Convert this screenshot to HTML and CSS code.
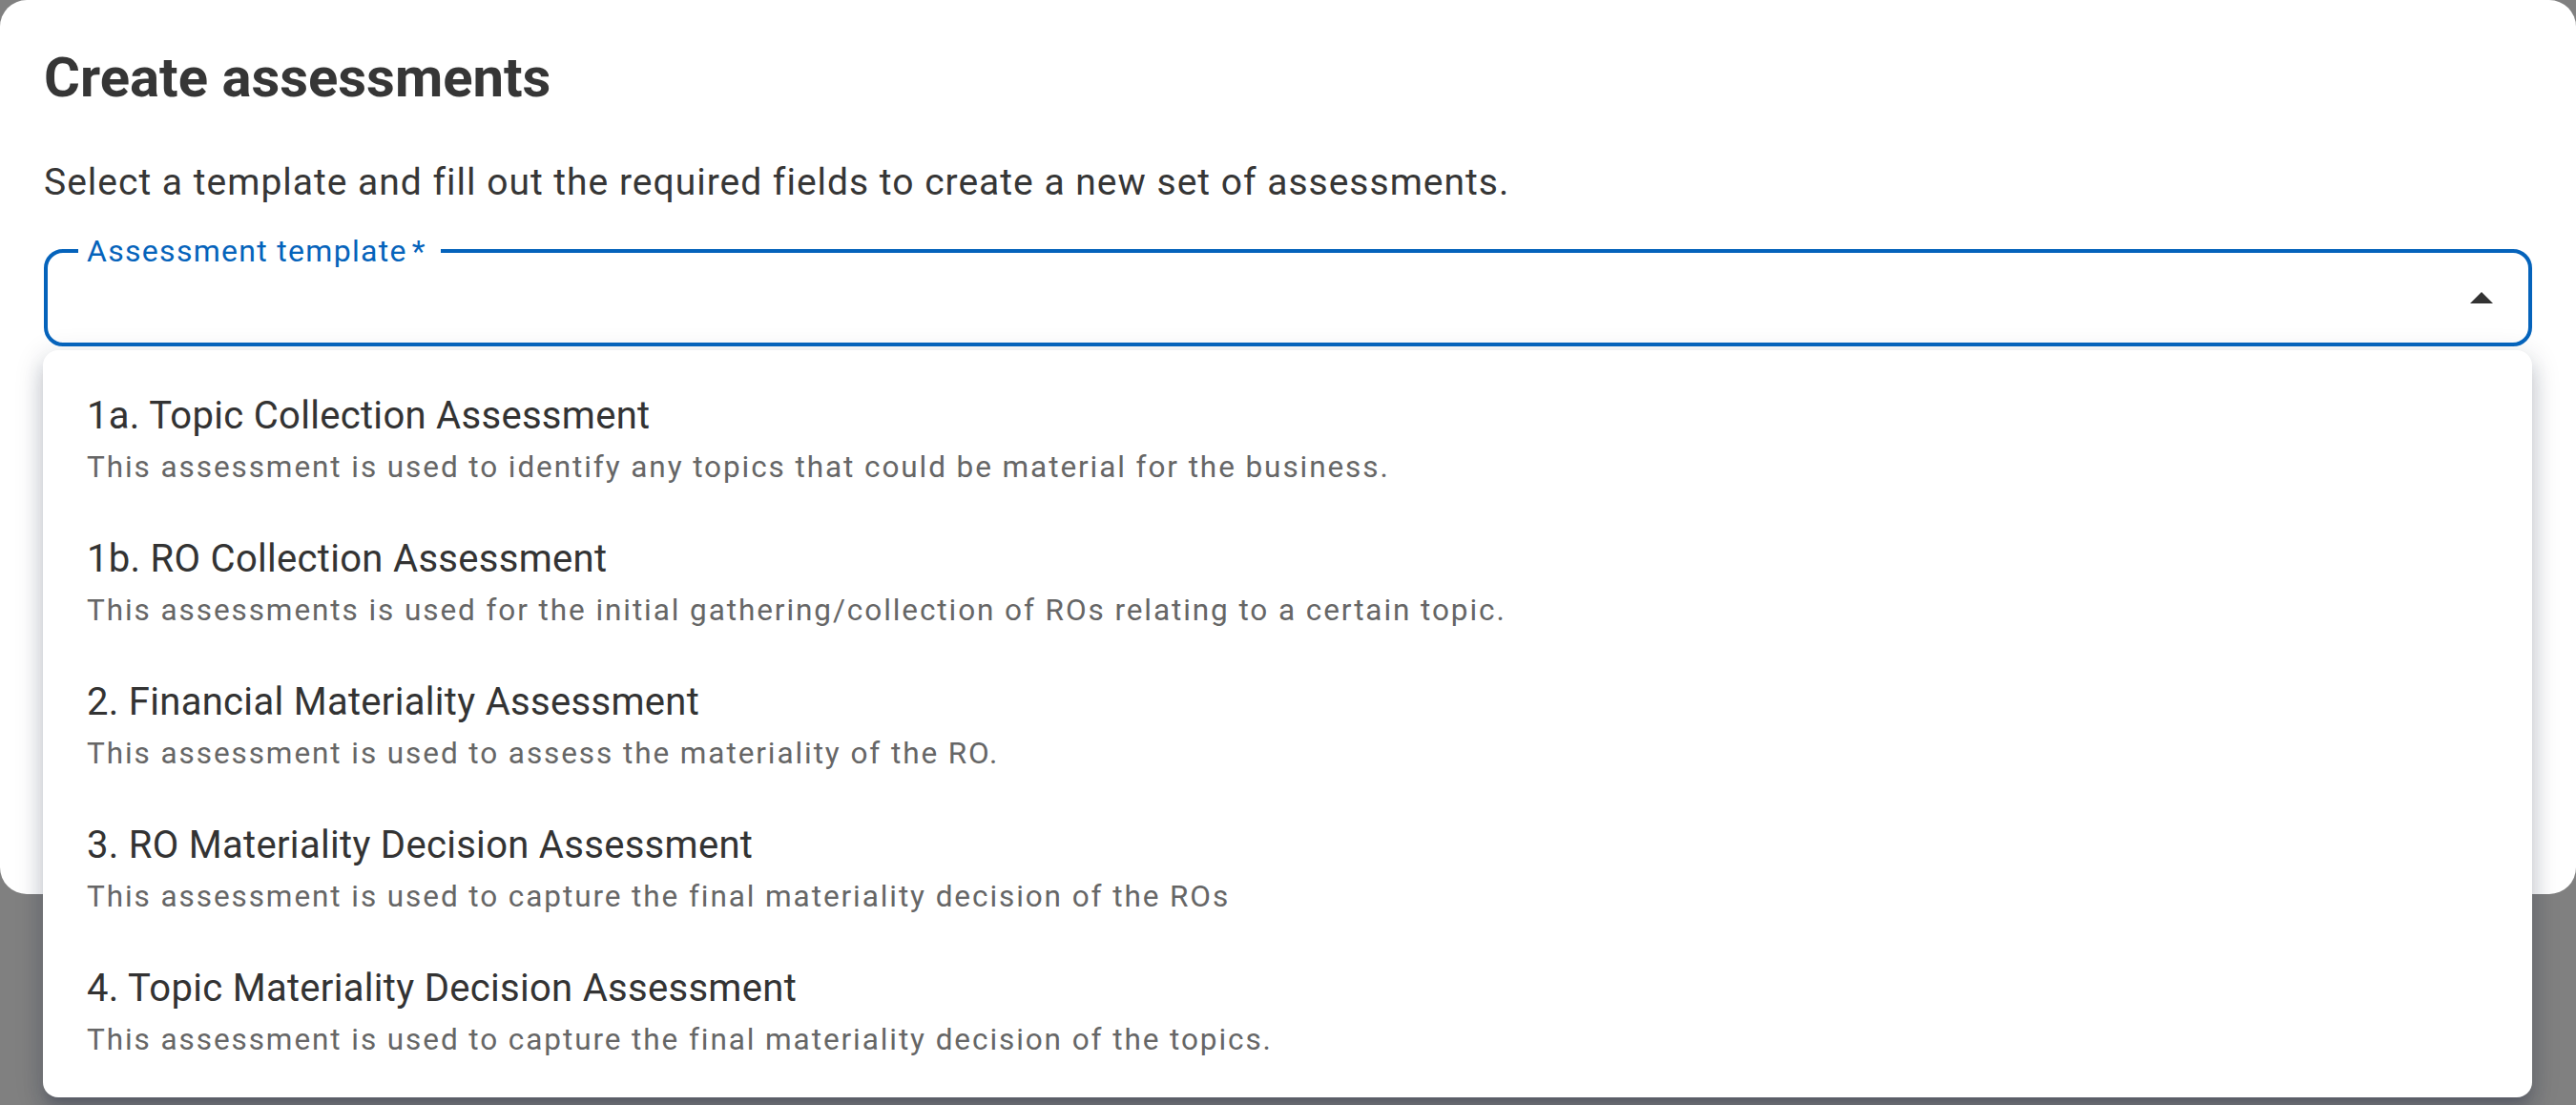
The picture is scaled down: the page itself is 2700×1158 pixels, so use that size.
FILE: index.html
```html
<!DOCTYPE html>
<html lang="en">
<head>
<meta charset="utf-8">
<title>Create assessments</title>
<link rel="stylesheet" href="styles.css">
</head>
<body>
<div class="modal">
  <h1 class="title">Create assessments</h1>
  <p class="subtitle">Select a template and fill out the required fields to create a new set of assessments.</p>
  <div class="field">
    <span class="label">Assessment template<span class="req">*</span></span>
    <svg class="arrow" width="24" height="12" viewBox="0 0 24 12"><path d="M0 12 L12 0 L24 12 Z" fill="#333"/></svg>
  </div>
  <ul class="menu">
    <li class="item">
      <div class="item-title">1a. Topic Collection Assessment</div>
      <div class="item-desc">This assessment is used to identify any topics that could be material for the business.</div>
    </li>
    <li class="item">
      <div class="item-title">1b. RO Collection Assessment</div>
      <div class="item-desc">This assessments is used for the initial gathering/collection of ROs relating to a certain topic.</div>
    </li>
    <li class="item">
      <div class="item-title">2. Financial Materiality Assessment</div>
      <div class="item-desc">This assessment is used to assess the materiality of the RO.</div>
    </li>
    <li class="item">
      <div class="item-title">3. RO Materiality Decision Assessment</div>
      <div class="item-desc">This assessment is used to capture the final materiality decision of the ROs</div>
    </li>
    <li class="item">
      <div class="item-title">4. Topic Materiality Decision Assessment</div>
      <div class="item-desc">This assessment is used to capture the final materiality decision of the topics.</div>
    </li>
  </ul>
</div>
</body>
</html>
```

FILE: styles.css
```css
html, body {
  margin: 0;
  padding: 0;
}
body {
  background: #808080;
  font-family: Roboto, "Liberation Sans", sans-serif;
  color: #333333;
  width: 2700px;
  height: 1158px;
  overflow: hidden;
}
.modal {
  box-sizing: border-box;
  width: 2700px;
  height: 937px;
  background: #ffffff;
  border-radius: 28px;
  padding: 49px 46px 0 46px;
}
.title {
  margin: 0;
  font-size: 58px;
  line-height: 64px;
  font-weight: 700;
  color: #363636;
}
.subtitle {
  margin: 54px 0 0 0;
  font-size: 39px;
  line-height: 48px;
  letter-spacing: 1px;
  color: #363636;
}
.field {
  position: relative;
  box-sizing: border-box;
  margin-top: 46px;
  height: 102px;
  border: 4px solid #0563bb;
  border-radius: 20px;
  display: flex;
  align-items: center;
  justify-content: flex-end;
  padding-right: 37px;
}
.label {
  position: absolute;
  top: -18px;
  left: 32px;
  padding: 0 15px 0 9px;
  background: #ffffff;
  color: #0563bb;
  font-size: 32px;
  line-height: 32px;
  letter-spacing: 1.3px;
}
.req {
  margin-left: 5px;
}
.arrow {
  display: block;
}
.menu {
  list-style: none;
  margin: 4px 0 0 -1px;
  padding: 23px 0 10px 0;
  background: #ffffff;
  border-radius: 16px;
  box-shadow: 0 10px 10px -6px rgba(20, 30, 60, 0.2),
              0 16px 20px 2px rgba(20, 30, 60, 0.14),
              0 6px 28px 4px rgba(20, 30, 60, 0.12);
  width: 2609px;
  box-sizing: border-box;
}
.item {
  padding: 21px 46px;
}
.item-title {
  font-size: 40px;
  line-height: 50px;
  letter-spacing: 0.3px;
  color: #333333;
}
.item-desc {
  font-size: 31.5px;
  line-height: 58px;
  letter-spacing: 1.92px;
  color: #666666;
}
```
